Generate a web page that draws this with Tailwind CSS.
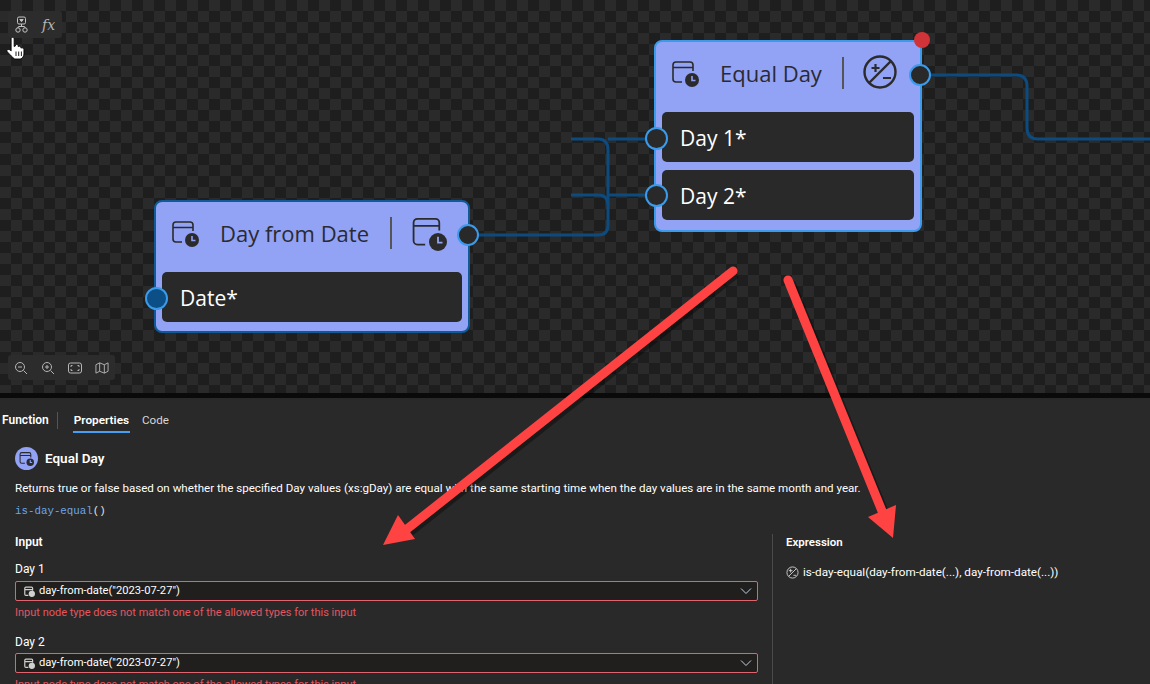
<!doctype html>
<html>
<head>
<meta charset="utf-8">
<script src="https://cdn.jsdelivr.net/npm/@tailwindcss/browser@4"></script>
</head>
<body class="m-0 bg-[#292929]">
<div class="relative w-[1150px] h-[684px] overflow-hidden flex flex-col font-['Open_Sans','Noto_Sans',sans-serif] text-white">

  <!-- canvas -->
  <div class="relative h-[393px] shrink-0 bg-[#1f1f1f] bg-[repeating-conic-gradient(#2a2a2a_0_25%,#1e1e1e_0_50%)] bg-[length:22px_22px]">

    <svg class="absolute left-0 top-0" width="1150" height="393" fill="none" stroke="#0d4a7e" stroke-width="3">
      <path d="M468 235H598Q608 235 608 225V150Q608 139 598 139H571"/>
      <path d="M571 195H598Q608 195 608 205"/>
      <path d="M608 139H656M608 195H656" />
      <path d="M921 75H1016Q1027 75 1027 86V128Q1027 139 1038 139H1150"/>
    </svg>

    <!-- top toolbar -->
    <div class="absolute left-[8px] top-[11px] w-[54px] h-[27px] rounded-[3px] bg-[#2c2c2c] flex items-center pl-[7px] text-[#c4c4c4]">
      <svg width="13" height="17" viewBox="0 0 13 17" fill="none" stroke="currentColor" stroke-width="1">
        <rect x="2.500" y="1" width="8" height="7" rx="1.500"/><path d="M4.800 3.500h3.400l-1.700 2.200z" fill="currentColor"/><path d="M6.500 8v2.500M3 12v-.5a1 1 0 0 1 1-1h5a1 1 0 0 1 1 1v.5"/><circle cx="3" cy="14" r="2.200"/><circle cx="10" cy="14" r="2.200"/>
      </svg>
      <span class="ml-[14px] font-['DejaVu_Serif',serif] italic font-light text-[14px] leading-none text-[#b5b5b5]">fx</span>
    </div>

    <!-- hand cursor -->
    <svg class="absolute left-[5px] top-[36px]" width="22" height="24" viewBox="0 0 18 24" preserveAspectRatio="none">
      <path d="M5.500 1.500C6.500 1 7.500 1.500 7.500 3V10.500L8.500 10V8.800C9.500 8 10.500 8.400 10.800 9.500V10.500C11.800 9.800 12.800 10.200 13 11.200V12C14 11.500 15.500 12 15.500 13.500V18C15.500 20.500 14 22.500 12.500 23H8C6 21.500 4.500 19 2 16C1 14.800 1.500 13.500 3 13.500C4 13.500 4.500 14.500 5 15V3C5 2.300 5 1.800 5.500 1.500Z" fill="#fff" stroke="#000" stroke-width="0.800"/>
      <path d="M9 15.500V20M11.200 15.500V20M13.400 15.500V20" stroke="#000" stroke-width="0.800"/>
    </svg>

    <!-- Day from Date node -->
    <div class="absolute left-[154px] top-[200px] w-[316px] h-[133px] rounded-[8px] border-2 border-[#0f5a97] bg-[#92a2f5] flex flex-col">
      <div class="h-[62px] shrink-0 flex items-center pl-[15px]">
        <svg width="28" height="28" viewBox="0 0 28 28" fill="none" stroke="#2b2b2b" stroke-width="1.600" class="shrink-0">
          <path d="M11 23H5a3 3 0 0 1-3-3V6a3 3 0 0 1 3-3h14a3 3 0 0 1 3 3v6M2 8.500h20"/>
          <circle cx="21" cy="21" r="7" fill="#2b2b2b" stroke="none"/><path d="M21 17v4.500h3.500" stroke="#92a2f5" stroke-width="1.600"/>
        </svg>
        <span class="ml-[21px] text-[22px] leading-none whitespace-nowrap text-[#2a2a33]">Day from Date</span>
        <span class="ml-[21px] w-[2px] h-[32px] bg-[#555] shrink-0"></span>
        <svg width="36" height="36" viewBox="0 0 28 28" fill="none" stroke="#2b2b2b" stroke-width="1.400" class="ml-[19px] shrink-0">
          <path d="M11 23H5a3 3 0 0 1-3-3V6a3 3 0 0 1 3-3h14a3 3 0 0 1 3 3v6M2 8.500h20"/>
          <circle cx="21" cy="21" r="7" fill="#2b2b2b" stroke="none"/><path d="M21 17v4.500h3.500" stroke="#92a2f5" stroke-width="1.400"/>
        </svg>
      </div>
      <div class="mt-[8px] mx-[6px] h-[50px] rounded-[5px] bg-[#292929] flex items-center pl-[18px] pt-[3px] text-[21px] text-white">Date*</div>
      <span class="absolute left-[-11px] top-[85px] w-[23px] h-[23px] rounded-full bg-[#0b4f86] border-2 border-[#3b9bea]"></span>
      <span class="absolute right-[-11px] top-[22px] w-[22px] h-[22px] rounded-full bg-[#292929] border-2 border-[#3b9bea]"></span>
    </div>

    <!-- Equal Day node -->
    <div class="absolute left-[654px] top-[40px] w-[268px] h-[192px] rounded-[8px] border-2 border-[#3b9bea] bg-[#92a2f5] flex flex-col">
      <div class="h-[62px] shrink-0 flex items-center pl-[15px]">
        <svg width="28" height="28" viewBox="0 0 28 28" fill="none" stroke="#2b2b2b" stroke-width="1.600" class="shrink-0">
          <path d="M11 23H5a3 3 0 0 1-3-3V6a3 3 0 0 1 3-3h14a3 3 0 0 1 3 3v6M2 8.500h20"/>
          <circle cx="21" cy="21" r="7" fill="#2b2b2b" stroke="none"/><path d="M21 17v4.500h3.500" stroke="#92a2f5" stroke-width="1.600"/>
        </svg>
        <span class="ml-[21px] text-[22px] leading-none whitespace-nowrap text-[#2a2a33]">Equal Day</span>
        <span class="ml-[20px] w-[2px] h-[32px] bg-[#555] shrink-0"></span>
        <svg width="34" height="34" viewBox="0 0 34 34" fill="none" stroke="#2b2b2b" stroke-width="2.400" class="ml-[19px] mb-[2px] shrink-0">
          <circle cx="17" cy="17" r="15.500"/><path d="M6 28L28 6"/><path d="M8.500 13h8M12.500 9v8M20 23h8" stroke-width="2.200"/>
        </svg>
      </div>
      <div class="mt-[8px] flex flex-col gap-[8px]">
        <div class="mx-[6px] h-[50px] rounded-[5px] bg-[#292929] flex items-center pl-[18px] pt-[3px] text-[21px] text-white">Day 1*</div>
        <div class="mx-[6px] h-[50px] rounded-[5px] bg-[#292929] flex items-center pl-[18px] pt-[3px] text-[21px] text-white">Day 2*</div>
      </div>
      <span class="absolute left-[-11px] top-[85px] w-[23px] h-[23px] rounded-full bg-[#292929] border-2 border-[#3b9bea]"></span>
      <span class="absolute left-[-11px] top-[142px] w-[23px] h-[23px] rounded-full bg-[#292929] border-2 border-[#3b9bea]"></span>
      <span class="absolute right-[-11px] top-[22px] w-[22px] h-[22px] rounded-full bg-[#292929] border-2 border-[#3b9bea]"></span>
      <span class="absolute right-[-10px] top-[-10px] w-[16px] h-[16px] rounded-full bg-[#d13438]"></span>
    </div>

    <!-- zoom toolbar -->
    <div class="absolute left-[8px] top-[355px] w-[107px] h-[25px] rounded-[3px] bg-[#2c2c2c] flex items-center pl-[6px] gap-[13px] text-[#b5b5b5]">
      <svg width="14" height="14" viewBox="0 0 14 14" fill="none" stroke="currentColor"><circle cx="6" cy="6" r="4.500"/><path d="M9.500 9.500L13 13M4 6h4"/></svg>
      <svg width="14" height="14" viewBox="0 0 14 14" fill="none" stroke="currentColor"><circle cx="6" cy="6" r="4.500"/><path d="M9.500 9.500L13 13M4 6h4M6 4v4"/></svg>
      <svg width="14" height="12" viewBox="0 0 14 12" fill="none" stroke="currentColor"><rect x="0.500" y="1" width="13" height="10" rx="2"/><path d="M3 5V3.500H4.500M9.500 3.500H11V5M11 7v1.500H9.500M4.500 8.500H3V7"/></svg>
      <svg width="14" height="14" viewBox="0 0 15 14" fill="none" stroke="currentColor"><path d="M1 3.500L5 1.500L10 3.500L14 1.500V10.500L10 12.500L5 10.500L1 12.500ZM5 1.500V10.500M10 3.500V12.500"/></svg>
    </div>
  </div>

  <div class="h-[5px] shrink-0 bg-[#0a0a0a]"></div>

  <!-- bottom panel -->
  <div class="relative flex-1 bg-[#292929] font-['Roboto',sans-serif] text-[12px] leading-[16px] text-white">
    <div class="flex items-center h-[35px] pl-[2px] pt-[9px]">
      <span class="font-semibold">Function</span>
      <span class="ml-[8px] w-px h-[17px] bg-[#555]"></span>
      <div class="ml-[15px] flex flex-col justify-center h-[26px] relative px-px">
        <span class="font-semibold text-[11.8px]">Properties</span>
        <span class="absolute left-0 right-0 bottom-0 h-[2px] bg-[#479ef5]"></span>
      </div>
      <span class="ml-[12px] text-[11.6px] text-[#d6d6d6]">Code</span>
    </div>

    <div class="pl-[15px] pt-[13px]">
      <div class="flex items-center h-[24px] gap-[7px]">
        <span class="w-[23px] h-[23px] rounded-full bg-[#92a2f5] flex items-center justify-center">
          <svg width="15" height="15" viewBox="0 0 28 28" fill="none" stroke="#2b2b2b" stroke-width="2">
            <path d="M11 23H5a3 3 0 0 1-3-3V6a3 3 0 0 1 3-3h14a3 3 0 0 1 3 3v6M2 8.500h20"/>
            <circle cx="21" cy="21" r="7" fill="#2b2b2b" stroke="none"/><path d="M21 17v4.500h3.500" stroke="#92a2f5" stroke-width="2"/>
          </svg>
        </span>
        <span class="font-semibold text-[13.500px]">Equal Day</span>
      </div>
      <p class="mt-[10px] whitespace-nowrap text-[11.600px]">Returns true or false based on whether the specified Day values (xs:gDay) are equal with the same starting time when the day values are in the same month and year.</p>
      <p class="mt-[7px] font-['Liberation_Mono',monospace] text-[10.800px] text-[#6ea6e8]">is-day-equal<span class="text-[#e0e0e0]">()</span></p>
    </div>

    <div class="flex mt-[15px]">
      <div class="w-[773px] shrink-0 pl-[15px] pr-[14px] border-r border-[#4a4a4a] h-[150px]">
        <div class="font-semibold">Input</div>
        <div class="mt-[11px]">Day 1</div>
        <div class="mt-[4px] h-[20px] border border-[#e0646e] rounded-[2px] bg-[#201f1e] flex items-center pl-[8px] pr-[4px]">
          <svg width="11" height="11" viewBox="0 0 28 28" fill="none" stroke="#d0d0d0" stroke-width="3" class="shrink-0"><path d="M11 24H5a3 3 0 0 1-3-3V6a3 3 0 0 1 3-3h14a3 3 0 0 1 3 3v6M2 9h20"/><circle cx="20" cy="20" r="8" fill="#d0d0d0" stroke="none"/></svg>
          <span class="ml-[4px] flex-1 text-[11.200px]">day-from-date("2023-07-27")</span>
          <svg width="12" height="8" viewBox="0 0 12 8" fill="none" stroke="#b8d4e8" class="mr-[1px]"><path d="M1 1.500L6 6.500L11 1.500"/></svg>
        </div>
        <div class="mt-[4px] text-[11px] text-[#e5555f]">Input node type does not match one of the allowed types for this input</div>
        <div class="mt-[13px]">Day 2</div>
        <div class="mt-[3px] h-[20px] border border-[#e0646e] rounded-[2px] bg-[#201f1e] flex items-center pl-[8px] pr-[4px]">
          <svg width="11" height="11" viewBox="0 0 28 28" fill="none" stroke="#d0d0d0" stroke-width="3" class="shrink-0"><path d="M11 24H5a3 3 0 0 1-3-3V6a3 3 0 0 1 3-3h14a3 3 0 0 1 3 3v6M2 9h20"/><circle cx="20" cy="20" r="8" fill="#d0d0d0" stroke="none"/></svg>
          <span class="ml-[4px] flex-1 text-[11.200px]">day-from-date("2023-07-27")</span>
          <svg width="12" height="8" viewBox="0 0 12 8" fill="none" stroke="#b8d4e8" class="mr-[1px]"><path d="M1 1.500L6 6.500L11 1.500"/></svg>
        </div>
        <div class="mt-[4px] text-[11px] text-[#e5555f]">Input node type does not match one of the allowed types for this input</div>
      </div>
      <div class="pl-[13px]">
        <div class="font-semibold text-[11.500px]">Expression</div>
        <div class="mt-[14px] flex items-center gap-[4px]">
          <svg width="13" height="13" viewBox="0 0 14 14" fill="none" stroke="#d0d0d0"><circle cx="7" cy="7" r="6"/><path d="M3 11L11 3M3 5h4M5 3v4M8 10h3"/></svg>
          <span class="text-[11.700px]">is-day-equal(day-from-date(...), day-from-date(...))</span>
        </div>
      </div>
    </div>
  </div>

  <!-- annotation arrows -->
  <svg class="absolute left-0 top-0 pointer-events-none" width="1150" height="684" fill="#ff4343">
    <path d="M733 271L407 529" stroke="#000" stroke-opacity="0.35" stroke-width="9" transform="translate(3 3)"/>
    <path d="M788 280L882 511" stroke="#000" stroke-opacity="0.35" stroke-width="9" transform="translate(3 3)"/>
    <path d="M733 271L407 529" stroke="#ff4343" stroke-width="9" stroke-linecap="round"/>
    <polygon points="383,545 398,515 415,539"/>
    <path d="M788 280L882 511" stroke="#ff4343" stroke-width="9" stroke-linecap="round"/>
    <polygon points="893,538 868,517 896,505"/>
  </svg>
</div>
</body>
</html>
